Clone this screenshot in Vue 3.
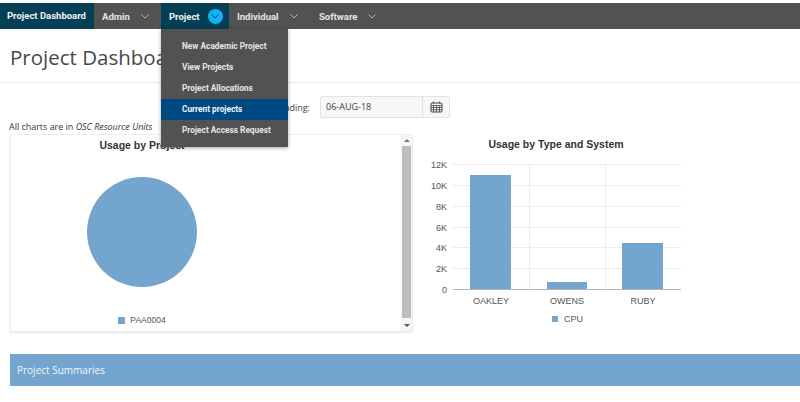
<script setup>
const navItems = [
  { label: 'Admin', width: 67 },
  { label: 'Project', width: 68, open: true },
  { label: 'Individual', width: 82 },
  { label: 'Software', width: 75 },
]
const menuItems = [
  { label: 'New Academic Project' },
  { label: 'View Projects' },
  { label: 'Project Allocations' },
  { label: 'Current projects', active: true },
  { label: 'Project Access Request' },
]
const yTicks = [
  { label: '12K', y: 164 },
  { label: '10K', y: 185 },
  { label: '8K', y: 206 },
  { label: '6K', y: 227 },
  { label: '4K', y: 247 },
  { label: '2K', y: 268 },
  { label: '0', y: 289 },
]
const bars = [
  { label: 'OAKLEY', x: 470, w: 41, top: 175, cx: 491 },
  { label: 'OWENS', x: 547, w: 40, top: 282, cx: 567 },
  { label: 'RUBY', x: 622, w: 41, top: 243, cx: 643 },
]
</script>

<template>
  <div class="page">
    <nav class="nav">
      <div class="nav-home">Project Dashboard</div>
      <div
        v-for="item in navItems"
        :key="item.label"
        class="nav-item"
        :class="{ open: item.open }"
        :style="{ width: item.width + 'px' }"
      >
        <span>{{ item.label }}</span>
        <span class="chev" :class="{ 'chev-open': item.open }">
          <svg width="8" height="5" viewBox="0 0 8 5"><path d="M0.5 0.5l3.5 3.5 3.5-3.5" fill="none" :stroke="item.open ? '#0b3d5c' : '#b5b5b5'" stroke-width="1" /></svg>
        </span>
        <ul v-if="item.open" class="menu">
          <li v-for="m in menuItems" :key="m.label" :class="{ active: m.active }">{{ m.label }}</li>
        </ul>
      </div>
    </nav>

    <header class="title-bar">
      <h1>Project Dashboard</h1>
    </header>

    <div class="filter">
      <label>Reading:</label>
      <div class="date">
        <span class="date-value">06-AUG-18</span>
        <span class="date-btn">
          <svg width="13" height="12" viewBox="0 0 13 12" fill="none" stroke="#444" stroke-width="1">
            <rect x="1" y="2" width="11" height="9" rx="1" />
            <path d="M1 4.5h11M1 6.5h11M1 8.7h11M3.5 4.5V11M6.5 4.5V11M9.5 4.5V11M3.5 0.5V2.5M9.5 0.5V2.5" stroke-width="0.8" />
          </svg>
        </span>
      </div>
    </div>

    <p class="note">All charts are in <em>OSC Resource Units</em></p>

    <div class="charts">
      <div class="card">
        <div class="card-body">
          <div class="chart-title">Usage by Project</div>
          <svg class="pie" width="110" height="110" viewBox="0 0 110 110"><circle cx="55" cy="55" r="55" fill="#73a5ce" /></svg>
          <div class="legend"><i></i>PAA0004</div>
        </div>
        <div class="scrollbar">
          <span class="arrow up"></span>
          <span class="thumb"></span>
          <span class="arrow down"></span>
        </div>
      </div>

      <svg class="bar-chart" width="387" height="198" viewBox="413 134 387 198">
        <text x="556" y="148" text-anchor="middle" class="svg-title">Usage by Type and System</text>
        <line v-for="t in yTicks.slice(0, 6)" :key="t.label" x1="453" x2="681" :y1="t.y + 0.5" :y2="t.y + 0.5" stroke="#e8edf2" />
        <line x1="529.5" x2="529.5" y1="164" y2="289" stroke="#e8edf2" />
        <line x1="605.5" x2="605.5" y1="164" y2="289" stroke="#e8edf2" />
        <text v-for="t in yTicks" :key="t.label" x="447" :y="t.y + 4" text-anchor="end" class="svg-label">{{ t.label }}</text>
        <rect v-for="b in bars" :key="b.label" :x="b.x" :y="b.top" :width="b.w" :height="289 - b.top" fill="#73a5ce" />
        <line x1="453" x2="681" y1="289.5" y2="289.5" stroke="#b5b5b5" />
        <text v-for="b in bars" :key="b.label" :x="b.cx" y="304" text-anchor="middle" class="svg-label">{{ b.label }}</text>
        <rect x="552" y="316" width="6" height="6" fill="#73a5ce" />
        <text x="564" y="322" class="svg-label">CPU</text>
      </svg>
    </div>

    <div class="summary">Project Summaries</div>
  </div>
</template>

<style scoped>
.page {
  width: 800px;
  height: 402px;
  overflow: hidden;
  background: #fff;
  font-family: "Open Sans", "Liberation Sans", sans-serif;
  color: #404040;
}

.nav {
  display: flex;
  height: 26px;
  margin-top: 3px;
  background: #525252;
  color: #e4e4e4;
  font-family: Roboto, "Liberation Sans", sans-serif;
  font-size: 9.5px;
  font-weight: 700;
}

.nav-home {
  width: 94px;
  line-height: 26px;
  padding-left: 7px;
  box-sizing: border-box;
  white-space: nowrap;
  background: #053f55;
  color: #eef3f5;
}

.nav-item {
  position: relative;
  display: flex;
  align-items: center;
  gap: 11px;
  padding-left: 8px;
  box-sizing: border-box;
}

.nav-item.open {
  background: #053f55;
  color: #eef3f5;
}

.chev {
  display: flex;
  align-items: center;
  justify-content: center;
}

.chev-open {
  width: 15px;
  height: 15px;
  border-radius: 50%;
  background: #0cb4f5;
  margin-left: -3px;
}

.menu {
  position: absolute;
  top: 26px;
  left: 0;
  width: 127px;
  margin: 0;
  padding: 7px 0 6px;
  list-style: none;
  background: #525252;
  box-shadow: 0 1px 4px rgba(0, 0, 0, 0.35);
  font-size: 8.3px;
  z-index: 5;
}

.menu li {
  height: 21px;
  line-height: 21px;
  padding-left: 21px;
  white-space: nowrap;
  color: #e6e6e6;
}

.menu li.active {
  background: #004a83;
  color: #f2f6fa;
}

.title-bar {
  height: 54px;
  border-bottom: 1px solid #ececec;
  box-sizing: border-box;
  padding-left: 10px;
}

.title-bar h1 {
  margin: 0;
  padding-top: 13px;
  font-size: 20.5px;
  font-weight: 400;
  line-height: 30px;
  color: #484848;
}

.filter {
  display: flex;
  align-items: center;
  justify-content: flex-end;
  gap: 10px;
  width: 450px;
  margin-top: 13px;
  font-size: 9px;
}

.date {
  display: flex;
  width: 130px;
  height: 22px;
  box-sizing: border-box;
  border: 1px solid #e3e3e3;
  border-radius: 2px;
  background: #f7f7f7;
}

.date-value {
  flex: 1;
  line-height: 20px;
  padding-left: 5px;
}

.date-btn {
  width: 26px;
  display: flex;
  align-items: center;
  justify-content: center;
  border-left: 1px solid #e3e3e3;
}

.note {
  margin: 2px 0 0 9px;
  height: 14px;
  line-height: 14px;
  font-size: 8.95px;
  color: #333;
}

.charts {
  display: flex;
  padding-left: 10px;
}

.card {
  display: flex;
  width: 403px;
  height: 198px;
  box-sizing: border-box;
  border: 1px solid #eee;
  border-radius: 2px;
  box-shadow: 0 1px 2px rgba(0, 0, 0, 0.1);
}

.card-body {
  flex: 1;
  display: flex;
  flex-direction: column;
  align-items: center;
  padding-right: 128px;
}

.chart-title,
.svg-title {
  font-family: "Liberation Sans", sans-serif;
  font-weight: 700;
  font-size: 10.5px;
  color: #333;
}

.chart-title {
  margin-top: 3px;
  line-height: 14px;
}

.pie {
  margin-top: 25px;
}

.legend {
  display: flex;
  align-items: center;
  gap: 5px;
  margin-top: 28px;
  font-family: "Liberation Sans", sans-serif;
  font-size: 8.5px;
  color: #555;
}

.legend i {
  width: 7px;
  height: 7px;
  background: #73a5ce;
}

.scrollbar {
  width: 11px;
  display: flex;
  flex-direction: column;
  align-items: center;
  background: #f5f5f5;
}

.thumb {
  flex: 1;
  width: 9px;
  background: #bdbdbd;
}

.arrow {
  width: 0;
  height: 0;
  border-left: 3px solid transparent;
  border-right: 3px solid transparent;
}

.arrow.up {
  margin: 4px 0;
  border-bottom: 3px solid #777;
}

.arrow.down {
  margin: 6px 0 4px;
  border-top: 3px solid #555;
}

.svg-label {
  font-family: "Liberation Sans", sans-serif;
  font-size: 9px;
  fill: #555;
}

.svg-title {
  fill: #333;
}

.summary {
  height: 32px;
  line-height: 32px;
  margin: 22px 0 0 10px;
  padding-left: 7px;
  background: #73a5ce;
  color: #f2f6fa;
  font-size: 10px;
}
</style>
